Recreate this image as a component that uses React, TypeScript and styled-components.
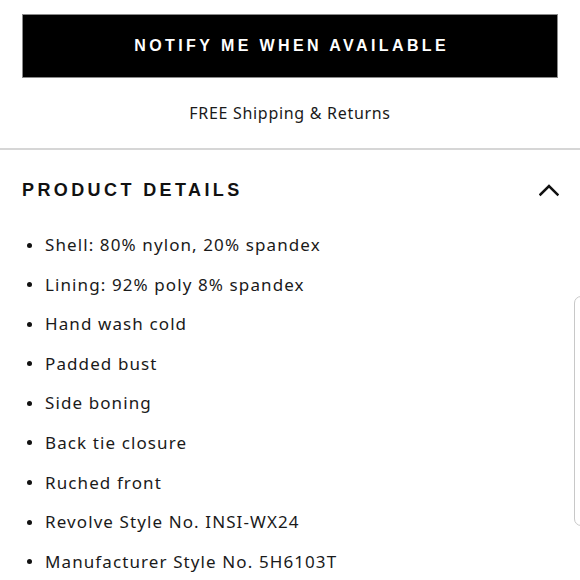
import styled, { createGlobalStyle } from 'styled-components';

const GlobalStyle = createGlobalStyle`
  html, body {
    margin: 0;
    padding: 0;
    background: #ffffff;
  }

  body {
    font-family: 'Noto Sans', 'Liberation Sans', sans-serif;
    color: #111111;
    width: 580px;
    height: 580px;
    overflow: hidden;
    position: relative;
  }
`;

const Page = styled.div`
  display: flex;
  flex-direction: column;
  width: 580px;
`;

const Top = styled.div`
  display: flex;
  flex-direction: column;
  align-items: center;
  padding: 14px 22px 0 22px;
`;

const NotifyButton = styled.button`
  width: 536px;
  height: 64px;
  background: #000000;
  border: 1px solid #8a8a8a;
  color: #ffffff;
  font-family: 'Liberation Sans', Arial, sans-serif;
  font-weight: 700;
  font-size: 16px;
  letter-spacing: 3.4px;
  text-indent: 3.4px;
  text-transform: uppercase;
  cursor: pointer;
  padding: 0;
`;

const ShippingNote = styled.div`
  font-size: 16px;
  line-height: 22px;
  letter-spacing: 0.7px;
  margin-top: 24px;
  margin-bottom: 24px;
  color: #1a1a1a;
`;

const Divider = styled.div`
  height: 2px;
  background: #d6d6d6;
  width: 100%;
`;

const SectionHeader = styled.div`
  display: flex;
  align-items: center;
  justify-content: space-between;
  padding: 28px 21px 0 22px;
  height: 24px;
`;

const SectionTitle = styled.h2`
  margin: 0;
  font-family: 'Liberation Sans', Arial, sans-serif;
  font-weight: 700;
  font-size: 18px;
  letter-spacing: 3.4px;
  color: #111111;
`;

const DetailList = styled.ul`
  list-style: none;
  margin: 31px 0 0 0;
  padding: 0 22px;
  display: flex;
  flex-direction: column;
  gap: 15.6px;
`;

const DetailItem = styled.li`
  display: flex;
  align-items: center;
  font-size: 17px;
  line-height: 24px;
  letter-spacing: 1.1px;
  color: #1a1a1a;

  &::before {
    content: '';
    width: 5px;
    height: 5px;
    border-radius: 50%;
    background: #111111;
    margin: 0 13px 0 5px;
    flex: none;
  }
`;

const SideTab = styled.div`
  position: absolute;
  left: 574px;
  top: 296px;
  width: 40px;
  height: 228px;
  border: 1px solid #c8c8c8;
  border-radius: 7px;
  background: #ffffff;
`;

const details = [
  'Shell: 80% nylon, 20% spandex',
  'Lining: 92% poly 8% spandex',
  'Hand wash cold',
  'Padded bust',
  'Side boning',
  'Back tie closure',
  'Ruched front',
  'Revolve Style No. INSI-WX24',
  'Manufacturer Style No. 5H6103T',
];

function ChevronUp() {
  return (
    <svg width="20" height="14" viewBox="0 0 20 14" fill="none">
      <path d="M1.5 11.5 L10 3 L18.5 11.5" stroke="#111111" strokeWidth="2.6" strokeLinecap="square" />
    </svg>
  );
}

function App() {
  return (
    <>
      <GlobalStyle />
      <Page>
        <Top>
          <NotifyButton>Notify me when available</NotifyButton>
          <ShippingNote>FREE Shipping &amp; Returns</ShippingNote>
        </Top>
        <Divider />
        <SectionHeader>
          <SectionTitle>PRODUCT DETAILS</SectionTitle>
          <ChevronUp />
        </SectionHeader>
        <DetailList>
          {details.map((d, i) => (
            <DetailItem key={i}>{d}</DetailItem>
          ))}
        </DetailList>
      </Page>
      <SideTab />
    </>
  );
}

export default App;
